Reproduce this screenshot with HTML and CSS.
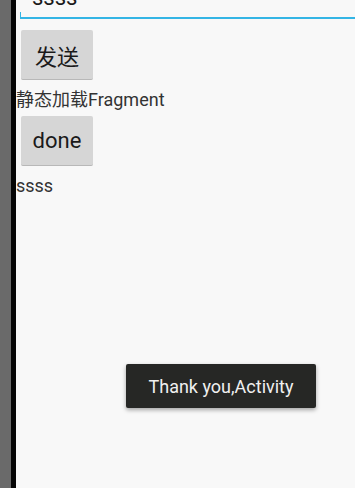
FILE: index.html
```html
<!DOCTYPE html>
<html>
<head>
<meta charset="utf-8">
<link rel="stylesheet" href="styles.css">
</head>
<body>
<div class="screen">
  <div class="strip-gray"></div>
  <div class="strip-black"></div>
  <div class="main">
    <div class="edit"><span class="edit-text">ssss</span></div>
    <div class="btn">发送</div>
    <div class="label">静态加载Fragment</div>
    <div class="btn">done</div>
    <div class="label">ssss</div>
    <div class="toast">Thank you,Activity</div>
  </div>
</div>
</body>
</html>
```
FILE: styles.css
```css
html, body {
  margin: 0;
  padding: 0;
}
body {
  width: 355px;
  height: 488px;
  overflow: hidden;
  font-family: Roboto, "Noto Sans CJK SC", sans-serif;
}
.screen {
  display: flex;
  height: 488px;
}
.strip-gray {
  width: 11px;
  background: #6a6a6a;
}
.strip-black {
  width: 5px;
  background: #050505;
}
.main {
  flex: 1;
  background: #f8f8f8;
  position: relative;
  display: flex;
  flex-direction: column;
  align-items: flex-start;
}
.edit {
  position: relative;
  align-self: stretch;
  margin-left: 4px;
  height: 17px;
  border-bottom: 2px solid #33b5e5;
  overflow: hidden;
}
.edit::before {
  content: "";
  position: absolute;
  left: 0;
  bottom: 0;
  width: 1px;
  height: 5px;
  background: #33b5e5;
}
.edit-text {
  display: block;
  font-size: 22px;
  line-height: 22px;
  margin-top: -13px;
  padding-left: 12px;
  color: #1a1a1a;
}
.btn {
  margin: 11px 0 0 5px;
  width: 72px;
  height: 50px;
  background: #d6d6d6;
  border-bottom: 1px solid #b8b8b8;
  box-sizing: border-box;
  border-radius: 2px;
  display: flex;
  align-items: center;
  justify-content: center;
  font-size: 22px;
  color: #1a1a1a;
}
.label {
  font-size: 18px;
  line-height: 22px;
  margin-top: 9px;
  color: #333;
}
.label + .btn {
  margin-top: 5px;
}
.toast {
  position: absolute;
  left: 110px;
  top: 364px;
  width: 190px;
  height: 44px;
  box-sizing: border-box;
  background: #262725;
  border-radius: 2px;
  box-shadow: 0 2px 4px rgba(0,0,0,0.35);
  color: #f0f0f0;
  font-size: 18px;
  display: flex;
  align-items: center;
  justify-content: center;
}
```
